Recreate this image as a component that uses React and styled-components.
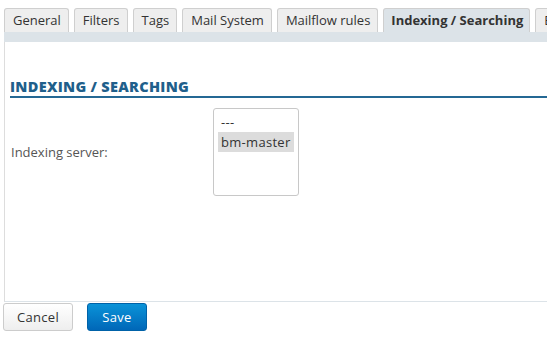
import styled, { createGlobalStyle } from "styled-components";

const GlobalStyle = createGlobalStyle`
  *, *::before, *::after {
    box-sizing: border-box;
  }
  html, body {
    margin: 0;
    padding: 0;
    background: #fff;
  }
  body {
    font-family: "Open Sans", "Liberation Sans", sans-serif;
    color: #333;
    overflow: hidden;
  }
`;

const TABS = [
  "General",
  "Filters",
  "Tags",
  "Mail System",
  "Mailflow rules",
  "Indexing / Searching",
  "Backup",
];

export default function App() {
  return (
    <Page>
      <GlobalStyle />
      <TabBar>
        {TABS.map((t) => (
          <Tab key={t} $active={t === "Indexing / Searching"}>
            {t}
          </Tab>
        ))}
      </TabBar>
      <Band />
      <Panel>
        <Heading>INDEXING / SEARCHING</Heading>
        <FormRow>
          <Label>Indexing server:</Label>
          <ListBox>
            <Option>---</Option>
            <Option $selected>bm-master</Option>
          </ListBox>
        </FormRow>
      </Panel>
      <Actions>
        <Button>Cancel</Button>
        <Button $primary>Save</Button>
      </Actions>
    </Page>
  );
}

const Page = styled.div`
  width: 547px;
  height: 337px;
  overflow: hidden;
`;

const TabBar = styled.div`
  display: flex;
  gap: 5px;
  padding: 8px 0 0 4px;
  white-space: nowrap;
`;

const Tab = styled.div`
  flex: none;
  height: 24px;
  line-height: 23px;
  padding: 0 7px 0 8px;
  font-size: 13px;
  color: #333;
  font-weight: ${(p) => (p.$active ? 700 : 400)};
  background: ${(p) => (p.$active ? "#dce3e8" : "#eeeeee")};
  border: 1px solid #cfcfcf;
  border-bottom: none;
  border-radius: 3px 3px 0 0;
  ${(p) => p.$active && "padding: 0 6px 0 7px;"}
`;

const Band = styled.div`
  height: 10px;
  margin-left: 4px;
  background: #dce3e8;
`;

const Panel = styled.div`
  height: 260px;
  margin-left: 4px;
  border-left: 1px solid #dddddd;
  border-bottom: 1px solid #dce3e8;
  padding: 36px 0 0 5px;
`;

const Heading = styled.h2`
  margin: 0;
  font-size: 14.5px;
  font-weight: 800;
  color: #1f5f8b;
  letter-spacing: 0.3px;
  padding-bottom: 1px;
  border-bottom: 2px solid #246894;
  line-height: 17px;
`;

const FormRow = styled.div`
  display: flex;
  align-items: center;
  margin-top: 10px;
`;

const Label = styled.div`
  width: 203px;
  padding-left: 1px;
  font-size: 13px;
  color: #555;
`;

const ListBox = styled.div`
  width: 86px;
  height: 88px;
  padding: 3px 4px;
  border: 1px solid #c8c8c8;
  border-radius: 3px;
  font-size: 13px;
  letter-spacing: 0.3px;
  color: #333;
`;

const Option = styled.div`
  height: 20px;
  line-height: 20px;
  padding-left: 3px;
  background: ${(p) => (p.$selected ? "#dcdcdc" : "transparent")};
`;

const Actions = styled.div`
  display: flex;
  gap: 14px;
  padding: 1px 0 0 3px;
`;

const Button = styled.button`
  height: 28px;
  width: ${(p) => (p.$primary ? "60px" : "70px")};
  padding: 0;
  font-family: inherit;
  font-size: 13px;
  letter-spacing: 0.3px;
  border-radius: 3px;
  cursor: pointer;
  color: ${(p) => (p.$primary ? "#fff" : "#333")};
  border: 1px solid ${(p) => (p.$primary ? "#0062a8" : "#cccccc")};
  background: ${(p) =>
    p.$primary
      ? "linear-gradient(#0a93d8, #0067b8)"
      : "linear-gradient(#ffffff, #eeeeee)"};
`;
